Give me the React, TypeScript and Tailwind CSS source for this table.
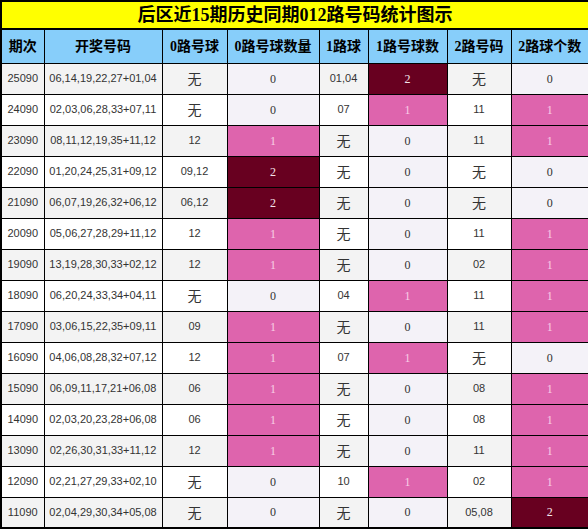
import React from 'react';

type Row = [string, string, string, number, string, number, string, number];

const rows: Row[] = [
  ['25090', '06,14,19,22,27+01,04', '无', 0, '01,04', 2, '无', 0],
  ['24090', '02,03,06,28,33+07,11', '无', 0, '07', 1, '11', 1],
  ['23090', '08,11,12,19,35+11,12', '12', 1, '无', 0, '11', 1],
  ['22090', '01,20,24,25,31+09,12', '09,12', 2, '无', 0, '无', 0],
  ['21090', '06,07,19,26,32+06,12', '06,12', 2, '无', 0, '无', 0],
  ['20090', '05,06,27,28,29+11,12', '12', 1, '无', 0, '11', 1],
  ['19090', '13,19,28,30,33+02,12', '12', 1, '无', 0, '02', 1],
  ['18090', '06,20,24,33,34+04,11', '无', 0, '04', 1, '11', 1],
  ['17090', '03,06,15,22,35+09,11', '09', 1, '无', 0, '11', 1],
  ['16090', '04,06,08,28,32+07,12', '12', 1, '07', 1, '无', 0],
  ['15090', '06,09,11,17,21+06,08', '06', 1, '无', 0, '08', 1],
  ['14090', '02,03,20,23,28+06,08', '06', 1, '无', 0, '08', 1],
  ['13090', '02,26,30,31,33+11,12', '12', 1, '无', 0, '11', 1],
  ['12090', '02,21,27,29,33+02,10', '无', 0, '10', 1, '02', 1],
  ['11090', '02,04,29,30,34+05,08', '无', 0, '无', 0, '05,08', 2],
];

const headers = ['期次', '开奖号码', '0路号球', '0路号球数量', '1路球', '1路号球数', '2路号码', '2路球个数'];
const widths = ['w-[43px]', 'w-[118px]', 'w-[65px]', 'w-[92px]', 'w-[49px]', 'w-[79px]', 'w-[64px]', 'w-[78px]'];

function CountCell({ n }: { n: number }) {
  const tone =
    n === 2
      ? 'bg-[#680020] text-[#f4e4ea]'
      : n === 1
        ? 'bg-[#de64ad] text-[#f8cfe6]'
        : 'bg-[#f4f2f8] text-[#333]';
  return (
    <td className={`border border-black text-center text-[12px] font-['Liberation_Serif',serif] ${tone}`}>{n}</td>
  );
}

function TextCell({ value, bg }: { value: string; bg: string }) {
  const cjk = value === '无';
  return (
    <td
      className={`border border-black text-center text-[#333] ${bg} ${
        cjk ? "text-[14px] font-['Noto_Sans_CJK_SC',sans-serif]" : "text-[11px] font-['Liberation_Sans',sans-serif]"
      }`}
    >
      {value}
    </td>
  );
}

export default function App() {
  return (
    <div className="w-[588px] h-[529px] bg-white">
      <table className="w-[588px] border-collapse border-2 border-black table-fixed">
        <colgroup>
          {widths.map((w, i) => (
            <col key={i} className={w} />
          ))}
        </colgroup>
        <thead>
          <tr className="h-[28px]">
            <th
              colSpan={8}
              className="border-2 border-black bg-[#ffff00] text-center text-[18px] font-bold text-black leading-none font-['Liberation_Serif','Noto_Sans_CJK_SC',serif]"
            >
              后区近15期历史同期012路号码统计图示
            </th>
          </tr>
          <tr className="h-[34px]">
            {headers.map((h) => (
              <th
                key={h}
                className="border border-black bg-[#87cefa] text-center text-[14px] font-bold text-black font-['Liberation_Serif','Noto_Sans_CJK_SC',serif]"
              >
                {h}
              </th>
            ))}
          </tr>
        </thead>
        <tbody>
          {rows.map((r, i) => {
            const bg = i % 2 === 0 ? 'bg-[#f3f3f3]' : 'bg-white';
            return (
              <tr key={r[0]} className="h-[31px]">
                <TextCell value={r[0]} bg={bg} />
                <TextCell value={r[1]} bg={bg} />
                <TextCell value={r[2]} bg={bg} />
                <CountCell n={r[3]} />
                <TextCell value={r[4]} bg={bg} />
                <CountCell n={r[5]} />
                <TextCell value={r[6]} bg={bg} />
                <CountCell n={r[7]} />
              </tr>
            );
          })}
        </tbody>
      </table>
    </div>
  );
}
